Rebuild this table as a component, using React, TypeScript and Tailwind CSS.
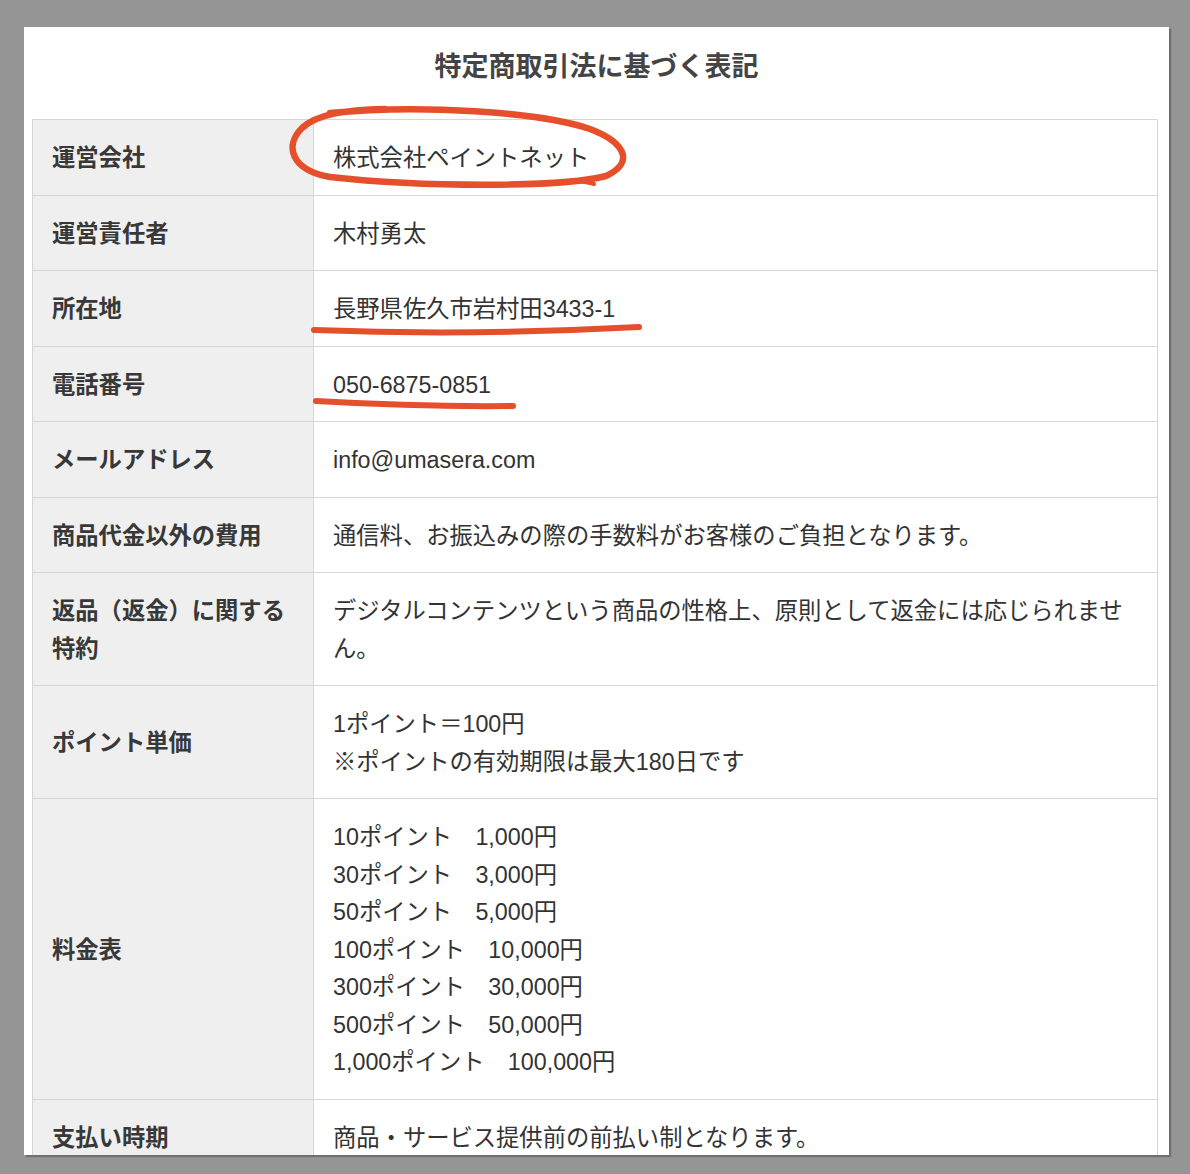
type Row = {
    label: string;
    lines: string[];
};

const rows: Row[] = [
    { label: '運営会社', lines: ['株式会社ペイントネット'] },
    { label: '運営責任者', lines: ['木村勇太'] },
    { label: '所在地', lines: ['長野県佐久市岩村田3433-1'] },
    { label: '電話番号', lines: ['050-6875-0851'] },
    { label: 'メールアドレス', lines: ['info@umasera.com'] },
    { label: '商品代金以外の費用', lines: ['通信料、お振込みの際の手数料がお客様のご負担となります。'] },
    {
        label: '返品（返金）に関する特約',
        lines: ['デジタルコンテンツという商品の性格上、原則として返金には応じられません。'],
    },
    { label: 'ポイント単価', lines: ['1ポイント＝100円', '※ポイントの有効期限は最大180日です'] },
    {
        label: '料金表',
        lines: [
            '10ポイント　1,000円',
            '30ポイント　3,000円',
            '50ポイント　5,000円',
            '100ポイント　10,000円',
            '300ポイント　30,000円',
            '500ポイント　50,000円',
            '1,000ポイント　100,000円',
        ],
    },
    { label: '支払い時期', lines: ['商品・サービス提供前の前払い制となります。'] },
];

// hand-drawn red marks on top of the screenshot
const Marks = () => (
    <svg
        className="pointer-events-none absolute left-0 top-0 h-[1174px] w-[1190px]"
        viewBox="0 0 1190 1174"
        fill="none"
        stroke="#e64f2b"
        strokeLinecap="round"
        strokeLinejoin="round"
    >
        <path
            d="M330 113 C420 104 540 112 590 129 C624 142 636 162 606 176 C560 188 420 187 330 177 C291 170 284 146 302 128 C317 114 345 110 385 109"
            strokeWidth={6.5}
        />
        <path d="M578 181 C586 182 591 183 594 184" strokeWidth={4} />
        <path d="M314 330 Q470 336 639 327" strokeWidth={6} />
        <path d="M316 401 Q420 407 513 406" strokeWidth={6} />
    </svg>
);

const App = () => {
    return (
        <div className="relative min-h-[1174px] w-[1190px] overflow-hidden bg-[#959595] pl-[24px] pt-[27px] font-['Liberation_Sans','Noto_Sans_CJK_JP',sans-serif]">
            <div className="h-[1128px] w-[1145px] overflow-hidden bg-white shadow-[2px_2px_1px_rgba(0,0,0,0.25)]">
                <h1 className="h-[92px] pt-[20px] text-center text-[27px] leading-[40px] font-bold text-[#444]">
                    特定商取引法に基づく表記
                </h1>
                <table className="ml-[8px] w-[1126px] table-fixed border-collapse text-[23.3px] leading-[37.5px] text-[#333]">
                    <colgroup>
                        <col className="w-[281px]" />
                        <col />
                    </colgroup>
                    <tbody>
                        {rows.map((row) => (
                            <tr key={row.label}>
                                <th className="border border-[#d6d6d6] bg-[#efefef] px-[19px] pb-[17px] pt-[20px] text-left align-middle font-bold text-[#383838]">
                                    {row.label}
                                </th>
                                <td className="border border-[#d6d6d6] px-[19px] pb-[17px] pt-[20px] align-middle">
                                    {row.lines.map((line) => (
                                        <div key={line}>{line}</div>
                                    ))}
                                </td>
                            </tr>
                        ))}
                    </tbody>
                </table>
            </div>
            <Marks />
        </div>
    );
};

export default App;
